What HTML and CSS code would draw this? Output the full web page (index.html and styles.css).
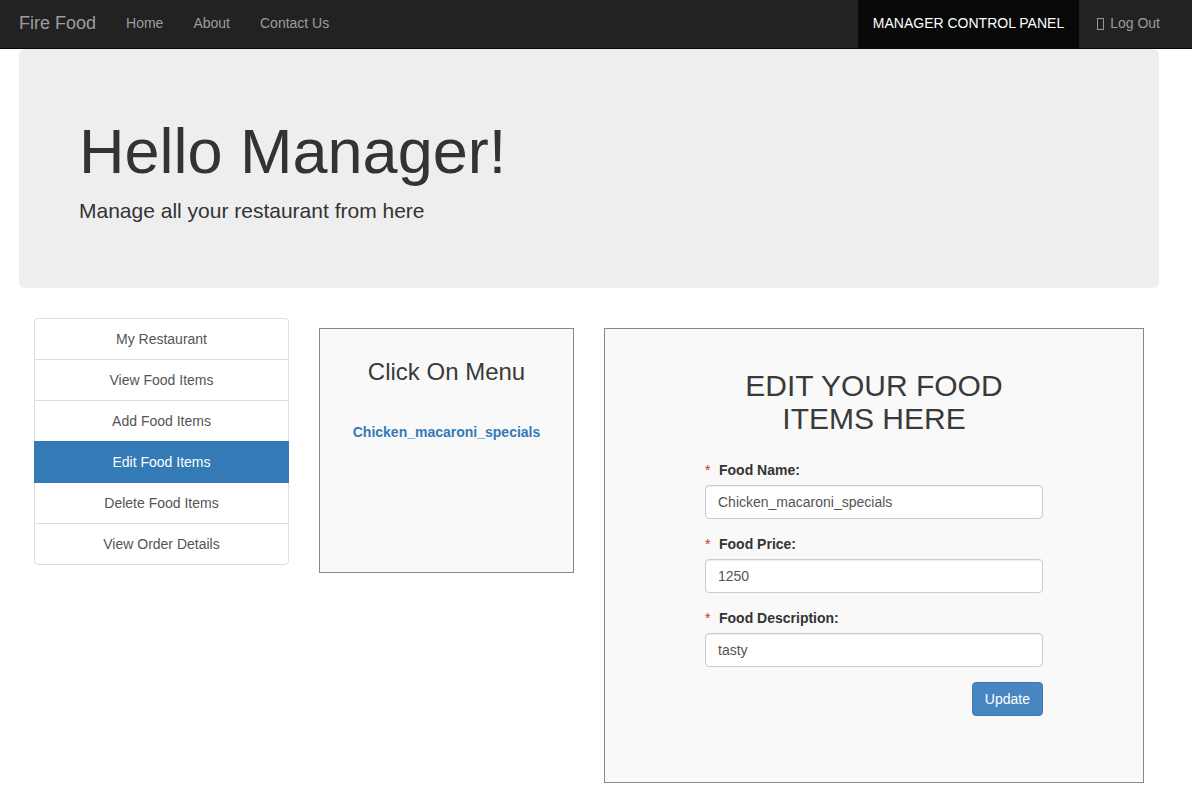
FILE: index.html
```html
<!DOCTYPE html>
<html>
<head>
<meta charset="utf-8">
<title>Fire Food - Manager</title>
<link rel="stylesheet" href="styles.css">
</head>
<body>
<nav class="navbar">
  <a class="brand" href="#">Fire Food</a>
  <ul class="nav-links">
    <li><a href="#">Home</a></li>
    <li><a href="#">About</a></li>
    <li><a href="#">Contact Us</a></li>
  </ul>
  <ul class="nav-links nav-right">
    <li class="active"><a href="#">MANAGER CONTROL PANEL</a></li>
    <li><a href="#"><svg class="tofu" width="7" height="12" viewBox="0 0 7 12"><rect x="0.5" y="0.5" width="6" height="11" fill="none" stroke="#8c9aa6" stroke-width="1"/></svg>Log Out</a></li>
  </ul>
</nav>

<header class="jumbotron">
  <h1>Hello Manager!</h1>
  <p>Manage all your restaurant from here</p>
</header>

<main class="content">
  <ul class="list-group">
    <li class="list-item"><a href="#">My Restaurant</a></li>
    <li class="list-item"><a href="#">View Food Items</a></li>
    <li class="list-item"><a href="#">Add Food Items</a></li>
    <li class="list-item active"><a href="#">Edit Food Items</a></li>
    <li class="list-item"><a href="#">Delete Food Items</a></li>
    <li class="list-item"><a href="#">View Order Details</a></li>
  </ul>

  <section class="panel menu-panel">
    <h3>Click On Menu</h3>
    <a class="menu-link" href="#">Chicken_macaroni_specials</a>
  </section>

  <section class="panel edit-panel">
    <form class="edit-form">
      <h2>EDIT YOUR FOOD ITEMS HERE</h2>
      <div class="form-group">
        <label><span class="req">*</span>Food Name:</label>
        <input class="form-control" type="text" value="Chicken_macaroni_specials">
      </div>
      <div class="form-group">
        <label><span class="req">*</span>Food Price:</label>
        <input class="form-control" type="text" value="1250">
      </div>
      <div class="form-group">
        <label><span class="req">*</span>Food Description:</label>
        <input class="form-control" type="text" value="tasty">
      </div>
      <div class="actions">
        <button class="btn-primary" type="button">Update</button>
      </div>
    </form>
  </section>
</main>
</body>
</html>
```

FILE: styles.css
```css
* { box-sizing: border-box; }

body {
  margin: 0;
  font-family: "Liberation Sans", Arial, sans-serif;
  font-size: 14px;
  line-height: 20px;
  color: #333;
  background: #fff;
}

a { text-decoration: none; }

/* Navbar */
.navbar {
  display: flex;
  align-items: stretch;
  height: 49px;
  background: #222;
  border-bottom: 1px solid #080808;
}

.brand {
  padding: 13px 15px 15px 19px;
  font-size: 18px;
  line-height: 20px;
  color: #9d9d9d;
}

.nav-links {
  display: flex;
  margin: 0;
  padding: 0;
  list-style: none;
}

.nav-links li a {
  display: flex;
  align-items: center;
  height: 48px;
  padding: 0 15px 2px;
  color: #9d9d9d;
  font-size: 14px;
}

.nav-right {
  margin-left: auto;
  margin-right: 17px;
}

.nav-right li.active a {
  background: #080808;
  color: #fff;
}

.tofu {
  margin: 1px 6px 0 3px;
}

/* Jumbotron */
.jumbotron {
  margin: 0 0 0 19px;
  width: 1140px;
  padding: 48px 60px 47px;
  background: #eee;
  border-radius: 6px;
}

.jumbotron h1 {
  margin: 20px 0 10px;
  font-size: 63px;
  line-height: 1.1;
  font-weight: 400;
  color: #333;
}

.jumbotron p {
  margin: 0 0 15px;
  font-size: 21px;
  line-height: 30px;
  color: #333;
}

/* Content row */
.content {
  display: flex;
  align-items: flex-start;
  gap: 30px;
  padding: 0 0 0 34px;
}

.list-group {
  width: 255px;
  margin: 30px 0 0;
  padding: 0;
  list-style: none;
}

.list-item {
  border: 1px solid #ddd;
  margin-bottom: -1px;
  background: #fff;
}

.list-item:first-child {
  border-radius: 4px 4px 0 0;
}

.list-item:last-child {
  border-radius: 0 0 4px 4px;
  margin-bottom: 0;
}

.list-item a {
  display: block;
  padding: 10px 15px;
  text-align: center;
  color: #555;
}

.list-item.active {
  position: relative;
  background: #337ab7;
  border-color: #337ab7;
}

.list-item.active a {
  color: #fff;
}

.panel {
  margin-top: 40px;
  background: #f9f9f9;
  border: 1px solid #888;
}

.menu-panel {
  width: 255px;
  height: 245px;
  text-align: center;
}

.menu-panel h3 {
  margin: 30px 0 0;
  font-size: 24px;
  line-height: 26px;
  font-weight: 400;
  color: #3a3a3a;
}

.menu-link {
  display: block;
  margin-top: 37px;
  font-weight: 700;
  color: #337ab7;
}

.edit-panel {
  width: 540px;
  display: flex;
  justify-content: center;
  padding: 0 0 66px 0;
}

.edit-form {
  width: 338px;
}

.edit-form h2 {
  margin: 40px 0 25px;
  text-align: center;
  font-size: 30px;
  line-height: 33px;
  font-weight: 400;
  color: #3a3a3a;
}

.form-group {
  margin-bottom: 15px;
}

.form-group label {
  display: block;
  margin-bottom: 5px;
  font-weight: 700;
  color: #333;
}

.req {
  display: inline-block;
  width: 14px;
  font-weight: 400;
  color: #c9302c;
}

.form-control {
  display: block;
  width: 100%;
  height: 34px;
  padding: 6px 12px;
  font-family: "Liberation Sans", Arial, sans-serif;
  font-size: 14px;
  line-height: 20px;
  color: #555;
  background: #fff;
  border: 1px solid #ccc;
  border-radius: 4px;
  box-shadow: inset 0 1px 1px rgba(0,0,0,.075);
}

.actions {
  display: flex;
  justify-content: flex-end;
}

.btn-primary {
  height: 34px;
  padding: 6px 12px;
  font-family: "Liberation Sans", Arial, sans-serif;
  font-size: 14px;
  line-height: 20px;
  color: #fff;
  background: #4786c0;
  border: 1px solid #3f7ab0;
  border-radius: 4px;
}
```
